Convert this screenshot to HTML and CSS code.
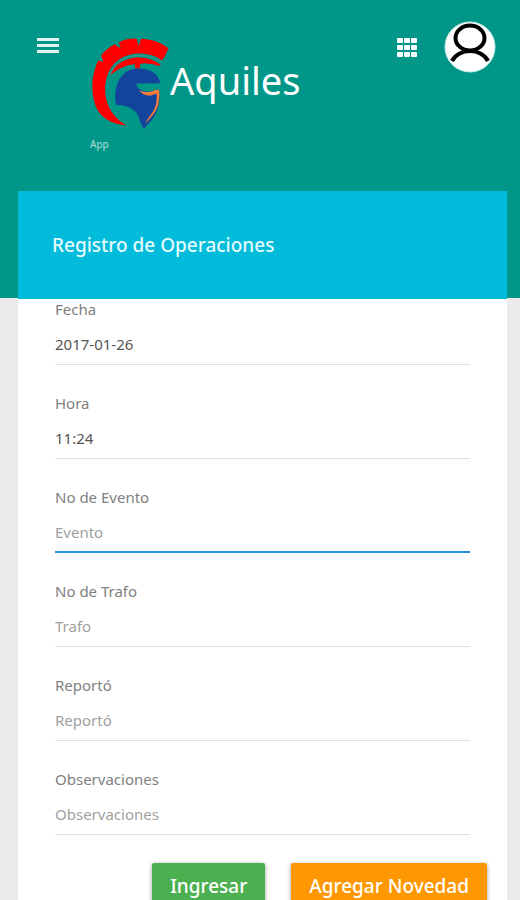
FILE: index.html
```html
<!DOCTYPE html>
<html lang="es">
<head>
<meta charset="utf-8">
<meta name="viewport" content="width=device-width, initial-scale=1">
<title>Aquiles</title>
<link rel="stylesheet" href="styles.css">
</head>
<body>
<header class="topbar">
  <button class="icon-button menu" type="button" aria-label="Menú">
    <svg width="22" height="16" viewBox="0 0 22 16"><path d="M0 0h22v3H0zM0 6h22v3H0zM0 12h22v3H0z" fill="#e0f5f1"/></svg>
  </button>
  <div class="brand">
    <div class="brand-row">
      <svg class="logo" width="80" height="93" viewBox="30 35 240 280" aria-hidden="true">
        <path fill="#f00" d="M139 301C109 299 75 286 57 262C38 237 34 190 38 158C42 138 47 123 54 106L70 110L63 91C72 77 88 65 104 57L121 69L117 51C134 42 153 39 170 40L176 62L183 40C211 41 244 50 266 69C259 85 253 98 246 106C229 92 200 84 174 85C133 86 104 107 88 136C72 166 71 209 85 242C97 270 116 287 139 301Z"/>
        <path fill="#f00" d="M90 151C102 119 133 100 170 97C198 95 224 105 243 119L235 122C216 115 198 113 181 116L179 130L166 130L164 117C133 119 109 134 90 151Z"/>
        <path fill="none" stroke="#65958a" stroke-width="2" d="M91 148C105 108 139 91 174 91C204 90 226 98 244 111"/>
        <path fill="#12449b" d="M108 240C98 184 122 130 174 130C211 131 236 145 241 174L169 175C169 188 184 199 204 199C219 199 226 193 238 193C242 224 238 249 222 276C211 293 198 300 193 313C187 306 183 296 178 282C173 257 145 239 108 240Z"/>
        <path fill="#f47b3a" d="M177 195C190 201 206 202 218 198C227 194 233 193 238 195C240 218 237 240 227 258C216 277 203 287 197 296C200 281 216 268 224 250C231 234 231 219 230 206C217 208 212 214 205 211C194 210 184 204 177 195Z"/>
      </svg>
      <h1 class="brand-name">Aquiles</h1>
    </div>
    <p class="brand-sub">App</p>
  </div>
  <div class="actions">
    <button class="icon-button" type="button" aria-label="Aplicaciones">
      <svg width="20" height="20" viewBox="0 0 20 20" fill="#fff"><rect x="0" y="1" width="6" height="5" rx="1"/><rect x="7" y="1" width="6" height="5" rx="1"/><rect x="14" y="1" width="6" height="5" rx="1"/><rect x="0" y="8" width="6" height="5" rx="1"/><rect x="7" y="8" width="6" height="5" rx="1"/><rect x="14" y="8" width="6" height="5" rx="1"/><rect x="0" y="15" width="6" height="5" rx="1"/><rect x="7" y="15" width="6" height="5" rx="1"/><rect x="14" y="15" width="6" height="5" rx="1"/></svg>
    </button>
    <button class="icon-button avatar" type="button" aria-label="Cuenta">
      <svg width="52" height="52" viewBox="0 0 52 52"><circle cx="26" cy="26" r="25" fill="#fff" stroke="#c8efea" stroke-width="1"/><ellipse cx="26" cy="17" rx="14.5" ry="12.5" fill="none" stroke="#000" stroke-width="4"/><path d="M8 40C11 34 18 30 26 30S41 34 44 40" fill="none" stroke="#000" stroke-width="4"/></svg>
    </button>
  </div>
</header>
<main class="card">
  <div class="card-head"><h2 class="card-title">Registro de Operaciones</h2></div>
  <form class="form">
    <div class="field"><label for="fecha">Fecha</label><input id="fecha" type="text" value="2017-01-26"></div>
    <div class="field"><label for="hora">Hora</label><input id="hora" type="text" value="11:24"></div>
    <div class="field"><label for="evento">No de Evento</label><input class="active" id="evento" type="text" placeholder="Evento"></div>
    <div class="field"><label for="trafo">No de Trafo</label><input id="trafo" type="text" placeholder="Trafo"></div>
    <div class="field"><label for="reporto">Reportó</label><input id="reporto" type="text" placeholder="Reportó"></div>
    <div class="field"><label for="obs">Observaciones</label><input id="obs" type="text" placeholder="Observaciones"></div>
  </form>
  <div class="buttons">
    <button class="btn green" type="button">Ingresar</button>
    <button class="btn orange" type="button">Agregar Novedad</button>
  </div>
</main>
</body>
</html>
```
FILE: styles.css
```css
* {
  box-sizing: border-box;
}

body {
  margin: 0;
  height: 100vh;
  overflow-y: auto;
  scrollbar-width: none;
  background: #ebebeb;
  font-family: "Noto Sans", sans-serif;
  font-size: 15px;
  line-height: 20px;
}

h1, h2, p {
  margin: 0;
}

.topbar {
  display: flex;
  align-items: flex-start;
  min-height: 298px;
  padding: 21px 24px 0 37px;
  background: #009788;
}

.icon-button {
  display: flex;
  padding: 0;
  border: 0;
  background: none;
}

.menu {
  margin-top: 17px;
}

.brand {
  flex: 1;
  padding-top: 16px;
  padding-left: 31px;
}

.brand-row {
  display: flex;
  align-items: flex-start;
}

.brand-name {
  padding-top: 19px;
  color: #fff;
  font-size: 38px;
  font-weight: 400;
  line-height: 48px;
}

.brand-sub {
  padding-top: 4px;
  color: #b2dfdb;
  font-size: 10px;
}

.actions {
  display: flex;
  align-items: center;
  gap: 27px;
}

.card {
  position: relative;
  margin: -107px 13px 0 18px;
  padding-bottom: 28px;
  background: #fff;
}

.card-head {
  display: flex;
  align-items: center;
  min-height: 108px;
  padding: 0 34px;
  background: #00bcda;
}

.card-title {
  color: #e4fbff;
  font-size: 19px;
  font-weight: 500;
  line-height: 28px;
}

.form {
  display: grid;
  gap: 28px;
  padding: 0 37px;
}

.field {
  display: flex;
  flex-direction: column;
  gap: 5px;
  color: #808080;
}

.field input {
  width: 100%;
  height: 41px;
  padding: 0;
  border: 0;
  border-bottom: 1px solid #e0e0e0;
  border-radius: 0;
  outline: 0;
  background: none;
  color: #555;
  font: inherit;
}

.field input::placeholder {
  color: #a0a0a0;
  opacity: 1;
}

.field input.active {
  border-bottom: 2px solid #2590e0;
}

.buttons {
  display: flex;
  justify-content: flex-end;
  gap: 26px;
  padding: 28px 20px 0;
}

.btn {
  padding: 8px 18px;
  border: 0;
  border-radius: 2px;
  box-shadow: 0 1px 4px rgba(0, 0, 0, 0.4);
  color: #fff;
  font: 500 19px/30px "Noto Sans", sans-serif;
}

.green {
  background: #4caf50;
}

.orange {
  background: #ff9800;
}
```
